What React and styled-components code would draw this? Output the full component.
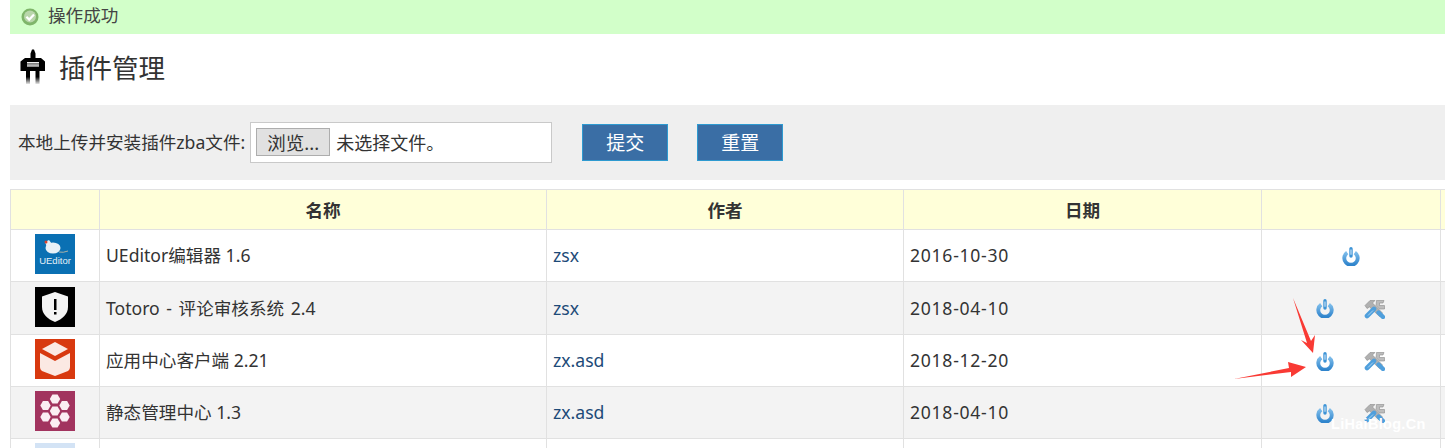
import React from 'react';
import styled, { createGlobalStyle } from 'styled-components';

const GlobalStyle = createGlobalStyle`
  html, body {
    margin: 0;
    height: 448px;
    overflow: hidden;
    background: #ffffff;
  }
  body {
    font-family: "Noto Sans", "Noto Sans CJK SC", sans-serif;
    font-size: 17.6px;
    color: #333333;
  }
`;

const Page = styled.div`
  position: relative;
  width: 1445px;
  height: 448px;
  padding-left: 10px;
  box-sizing: border-box;
  overflow: hidden;
`;

const Alert = styled.div`
  display: flex;
  align-items: center;
  gap: 9px;
  height: 34px;
  padding-left: 11px;
  box-sizing: border-box;
  background: #d2ffc9;
  font-size: 17.6px;
  color: #444444;
`;

const AlertText = styled.span`
  position: relative;
  top: -3px;
`;

const TitleRow = styled.div`
  display: flex;
  align-items: flex-start;
  gap: 13px;
  height: 71px;
  padding: 15px 0 0 10px;
  box-sizing: border-box;
`;

const Title = styled.h1`
  margin: 0;
  font-size: 26.5px;
  line-height: 38px;
  font-weight: 400;
  color: #333333;
`;

const UploadBar = styled.form`
  display: flex;
  align-items: center;
  height: 75px;
  padding-left: 8px;
  background: #efefef;
`;

const UploadLabel = styled.label`
  font-size: 17.6px;
  margin-right: 5px;
  padding-bottom: 2px;
  white-space: nowrap;
`;

const FileBox = styled.div`
  display: flex;
  align-items: center;
  gap: 6px;
  width: 302px;
  height: 41px;
  padding: 0 0 1px 5px;
  box-sizing: border-box;
  background: #ffffff;
  border: 1px solid #c9c9c9;
  font-size: 18px;
`;

const BrowseButton = styled.span`
  display: flex;
  align-items: center;
  justify-content: center;
  width: 74px;
  height: 28px;
  box-sizing: border-box;
  background: #e1e1e1;
  border: 1px solid #adadad;
  font-size: 18.5px;
`;

const SubmitButton = styled.button`
  width: 86px;
  height: 37px;
  margin-left: ${(props) => props.$gap}px;
  padding: 0 0 2px;
  background: #3a6ea5;
  border: 1px solid #2e9ad0;
  color: #ffffff;
  font-family: inherit;
  font-size: 19px;
`;

const Table = styled.table`
  width: 1445px;
  margin-top: 9px;
  border-collapse: collapse;
  table-layout: fixed;
`;

const HeadCell = styled.th`
  height: 39px;
  padding: 0;
  background: #ffffd9;
  border: 1px solid #e1e1e1;
  font-size: 17.6px;
  font-weight: 700;
  color: #333333;
`;

const Row = styled.tr`
  background: ${(props) => (props.$alt ? '#f3f3f3' : '#ffffff')};
`;

const Cell = styled.td`
  height: ${(props) => props.$h}px;
  padding: 0 6px 1px;
  border: 1px solid #e1e1e1;
  line-height: 20px;
  white-space: nowrap;
`;

const NameText = styled.span`
  word-spacing: ${(props) => (props.$spaced ? 2 : 0)}px;
`;

const DateText = styled.span`
  letter-spacing: 0.72px;
`;

const IconCell = styled(Cell)`
  padding: 0;
  text-align: center;
  line-height: 0;
`;

const ActionCell = styled(Cell)`
  padding: 1px 0 0;
`;

const Actions = styled.div`
  display: flex;
  justify-content: center;
  align-items: center;
  gap: 30px;
  padding-right: 1px;
`;

const AuthorLink = styled.a`
  color: #1d4a78;
  text-decoration: none;
`;

const LogoFrame = styled.span`
  display: inline-flex;
  position: relative;
  width: 40px;
  height: 40px;
  margin-bottom: 3px;
  vertical-align: middle;
  overflow: hidden;
`;

const UEditorText = styled.span`
  position: absolute;
  left: 0;
  right: 0;
  bottom: 7px;
  text-align: center;
  font-family: "Liberation Sans", sans-serif;
  font-size: 9.5px;
  line-height: 12px;
  color: #e6f1f8;
`;

const Overlay = styled.svg`
  position: absolute;
  left: 0;
  top: 0;
  pointer-events: none;
`;

const Watermark = styled.div`
  position: absolute;
  left: 1331px;
  top: 415px;
  font-family: "Liberation Sans", sans-serif;
  font-size: 14.5px;
  font-weight: 700;
  letter-spacing: 0.3px;
  line-height: 18px;
  color: #ffffff;
`;

function SuccessIcon() {
  return (
    <svg width="18" height="18" viewBox="0 0 18 18">
      <circle cx="9" cy="9" r="8.5" fill="#7fb56a" />
      <circle cx="9" cy="8.6" r="6" fill="#b9d6ab" />
      <path d="M5.4 8.8l2.8 2.8L13 6.6" fill="none" stroke="#ffffff" strokeWidth="2.2" />
    </svg>
  );
}

function PlugIcon() {
  return (
    <svg width="26" height="36" viewBox="0 0 26 36">
      <defs>
        <linearGradient id="prongFade" x1="0" y1="0" x2="0" y2="1">
          <stop offset="0.45" stopColor="#000000" />
          <stop offset="1" stopColor="#000000" stopOpacity="0.1" />
        </linearGradient>
      </defs>
      <path d="M12 0.500h2l1.500 4V9H21l4 3.500V22H0.500v-9.500L5 9h5.500V4.500z" fill="#000000" />
      <rect x="7" y="13" width="12" height="1.300" fill="#eeeeee" />
      <rect x="7" y="14.300" width="12" height="2" fill="#9a9a9a" />
      <rect x="7" y="16.300" width="12" height="1.300" fill="#eeeeee" />
      <rect x="6" y="22" width="4" height="13" fill="url(#prongFade)" />
      <rect x="15.500" y="22" width="4" height="13" fill="url(#prongFade)" />
    </svg>
  );
}

function PowerIcon() {
  return (
    <svg width="18" height="19" viewBox="0 0 18 19">
      <defs>
        <linearGradient id="powerBlue" x1="0" y1="0" x2="0" y2="1">
          <stop offset="0" stopColor="#7dbcea" />
          <stop offset="1" stopColor="#2f84cc" />
        </linearGradient>
      </defs>
      <path
        d="M5.200 5.600a6.700 6.700 0 1 0 7.600 0"
        fill="none"
        stroke="url(#powerBlue)"
        strokeWidth="3.900"
      />
      <path d="M9 1.800v7.200" stroke="#3c93d6" strokeWidth="3.400" strokeLinecap="round" />
      <path d="M9 2.400v5.400" stroke="#d3e8f8" strokeWidth="1.100" />
    </svg>
  );
}

function ToolsIcon() {
  return (
    <svg width="21" height="20" viewBox="0 0 21 20">
      <path d="M1 6.500L6 1.500h5L8.500 4l10 10-3 3.500L5.500 8 3 9.500z" fill="#b0b0b0" stroke="#8c8c8c" strokeWidth="0.600" />
      <path d="M12.500 1.500H20l-1 2.500h-3.500v2.500H20.500V10h-5l-3.500-3.500z" fill="#bcbcbc" stroke="#8c8c8c" strokeWidth="0.600" />
      <path d="M10 10L3 17" stroke="#4f9fdc" strokeWidth="4.600" strokeLinecap="round" />
      <path d="M14.500 13.500L19 18" stroke="#4f9fdc" strokeWidth="4.400" strokeLinecap="round" />
      <path d="M9 11.500L4 16.500" stroke="#a9d3f1" strokeWidth="1" />
    </svg>
  );
}

function UEditorLogo() {
  return (
    <LogoFrame>
      <svg width="40" height="40" viewBox="0 0 40 40">
        <rect width="40" height="40" fill="#0a70b3" />
        <ellipse cx="18" cy="14" rx="7.500" ry="5.500" fill="#e8f1f7" />
        <path d="M10 8l4-2 3 4-5 3z" fill="#e8f1f7" />
        <circle cx="11" cy="8" r="1.500" fill="#d8432f" />
        <path d="M24 18q4 1 9-1" fill="none" stroke="#a9b0a6" strokeWidth="1" />
      </svg>
      <UEditorText>UEditor</UEditorText>
    </LogoFrame>
  );
}

function ShieldLogo() {
  return (
    <LogoFrame>
      <svg width="40" height="40" viewBox="0 0 40 40">
        <rect width="40" height="40" fill="#000000" />
        <path d="M20 5l13 4.500V20c0 7-5.500 12-13 15C12.500 32 7 27 7 20V9.500z" fill="#f4f4f4" />
        <rect x="19" y="12" width="2.500" height="11" fill="#000000" />
        <rect x="19" y="25" width="2.500" height="2.500" fill="#000000" />
      </svg>
    </LogoFrame>
  );
}

function BoxLogo() {
  return (
    <LogoFrame>
      <svg width="40" height="40" viewBox="0 0 40 40">
        <rect width="40" height="40" fill="#d8390f" />
        <path d="M20 3l13 7-13 7-13-7z" fill="#fbe9e3" />
        <path d="M5 14l15 8 15-8v14c0 2-1 3-2 4l-13 5-13-5c-1-1-2-2-2-4z" fill="#fbe9e3" />
      </svg>
    </LogoFrame>
  );
}

const hexes = [
  [20, 8],
  [10.500, 14.500],
  [29.500, 14.500],
  [20, 20],
  [10.500, 26],
  [29.500, 26],
  [20, 32],
];

function HexLogo() {
  return (
    <LogoFrame>
      <svg width="40" height="40" viewBox="0 0 40 40">
        <rect width="40" height="40" fill="#a2345f" />
        {hexes.map(([x, y]) => (
          <path
            key={`${x}-${y}`}
            transform={`translate(${x} ${y})`}
            d="M-5.200 0L-2.600-4.500H2.600L5.200 0L2.600 4.500H-2.600z"
            fill="#fbeef3"
          />
        ))}
      </svg>
    </LogoFrame>
  );
}

function BlankLogo() {
  return (
    <LogoFrame>
      <svg width="40" height="40" viewBox="0 0 40 40">
        <rect width="40" height="40" fill="#d3e3f5" />
      </svg>
    </LogoFrame>
  );
}

const plugins = [
  { logo: <UEditorLogo />, name: 'UEditor编辑器 1.6', author: 'zsx', date: '2016-10-30', h: 50, tools: false },
  { logo: <ShieldLogo />, name: 'Totoro - 评论审核系统 2.4', author: 'zsx', date: '2018-04-10', h: 51, tools: true, spaced: true },
  { logo: <BoxLogo />, name: '应用中心客户端 2.21', author: 'zx.asd', date: '2018-12-20', h: 50, tools: true },
  { logo: <HexLogo />, name: '静态管理中心 1.3', author: 'zx.asd', date: '2018-04-10', h: 50, tools: true },
  { logo: <BlankLogo />, name: '', author: '', date: '', h: 50, tools: false },
];

export default function App() {
  return (
    <Page>
      <GlobalStyle />
      <Alert>
        <SuccessIcon />
        <AlertText>操作成功</AlertText>
      </Alert>
      <TitleRow>
        <PlugIcon />
        <Title>插件管理</Title>
      </TitleRow>
      <UploadBar>
        <UploadLabel>本地上传并安装插件zba文件:</UploadLabel>
        <FileBox>
          <BrowseButton>浏览...</BrowseButton>
          未选择文件。
        </FileBox>
        <SubmitButton type="button" $gap={30}>提交</SubmitButton>
        <SubmitButton type="button" $gap={29}>重置</SubmitButton>
      </UploadBar>
      <Table>
        <colgroup>
          <col width="89" />
          <col width="447" />
          <col width="357" />
          <col width="358" />
          <col width="179" />
          <col width="15" />
        </colgroup>
        <thead>
          <tr>
            <HeadCell />
            <HeadCell>名称</HeadCell>
            <HeadCell>作者</HeadCell>
            <HeadCell>日期</HeadCell>
            <HeadCell />
            <HeadCell />
          </tr>
        </thead>
        <tbody>
          {plugins.map((plugin, i) => (
            <Row key={i} $alt={i % 2 === 1}>
              <IconCell $h={plugin.h}>{plugin.logo}</IconCell>
              <Cell $h={plugin.h}>
                <NameText $spaced={plugin.spaced}>{plugin.name}</NameText>
              </Cell>
              <Cell $h={plugin.h}>
                <AuthorLink href="#">{plugin.author}</AuthorLink>
              </Cell>
              <Cell $h={plugin.h}>
                <DateText>{plugin.date}</DateText>
              </Cell>
              <ActionCell $h={plugin.h}>
                {i < 4 && (
                  <Actions>
                    <PowerIcon />
                    {plugin.tools && <ToolsIcon />}
                  </Actions>
                )}
              </ActionCell>
              <Cell $h={plugin.h} />
            </Row>
          ))}
        </tbody>
      </Table>
      <Overlay width="1445" height="448" viewBox="0 0 1445 448">
        <path d="M1293 298L1311 341L1315 335L1313 353L1301 340L1307 343z" fill="#f93a34" />
        <path d="M1234 379L1289 368L1288 362L1306 367L1291 377L1291 372z" fill="#f93a34" />
      </Overlay>
      <Watermark>LiHaiBlog.Cn</Watermark>
    </Page>
  );
}
